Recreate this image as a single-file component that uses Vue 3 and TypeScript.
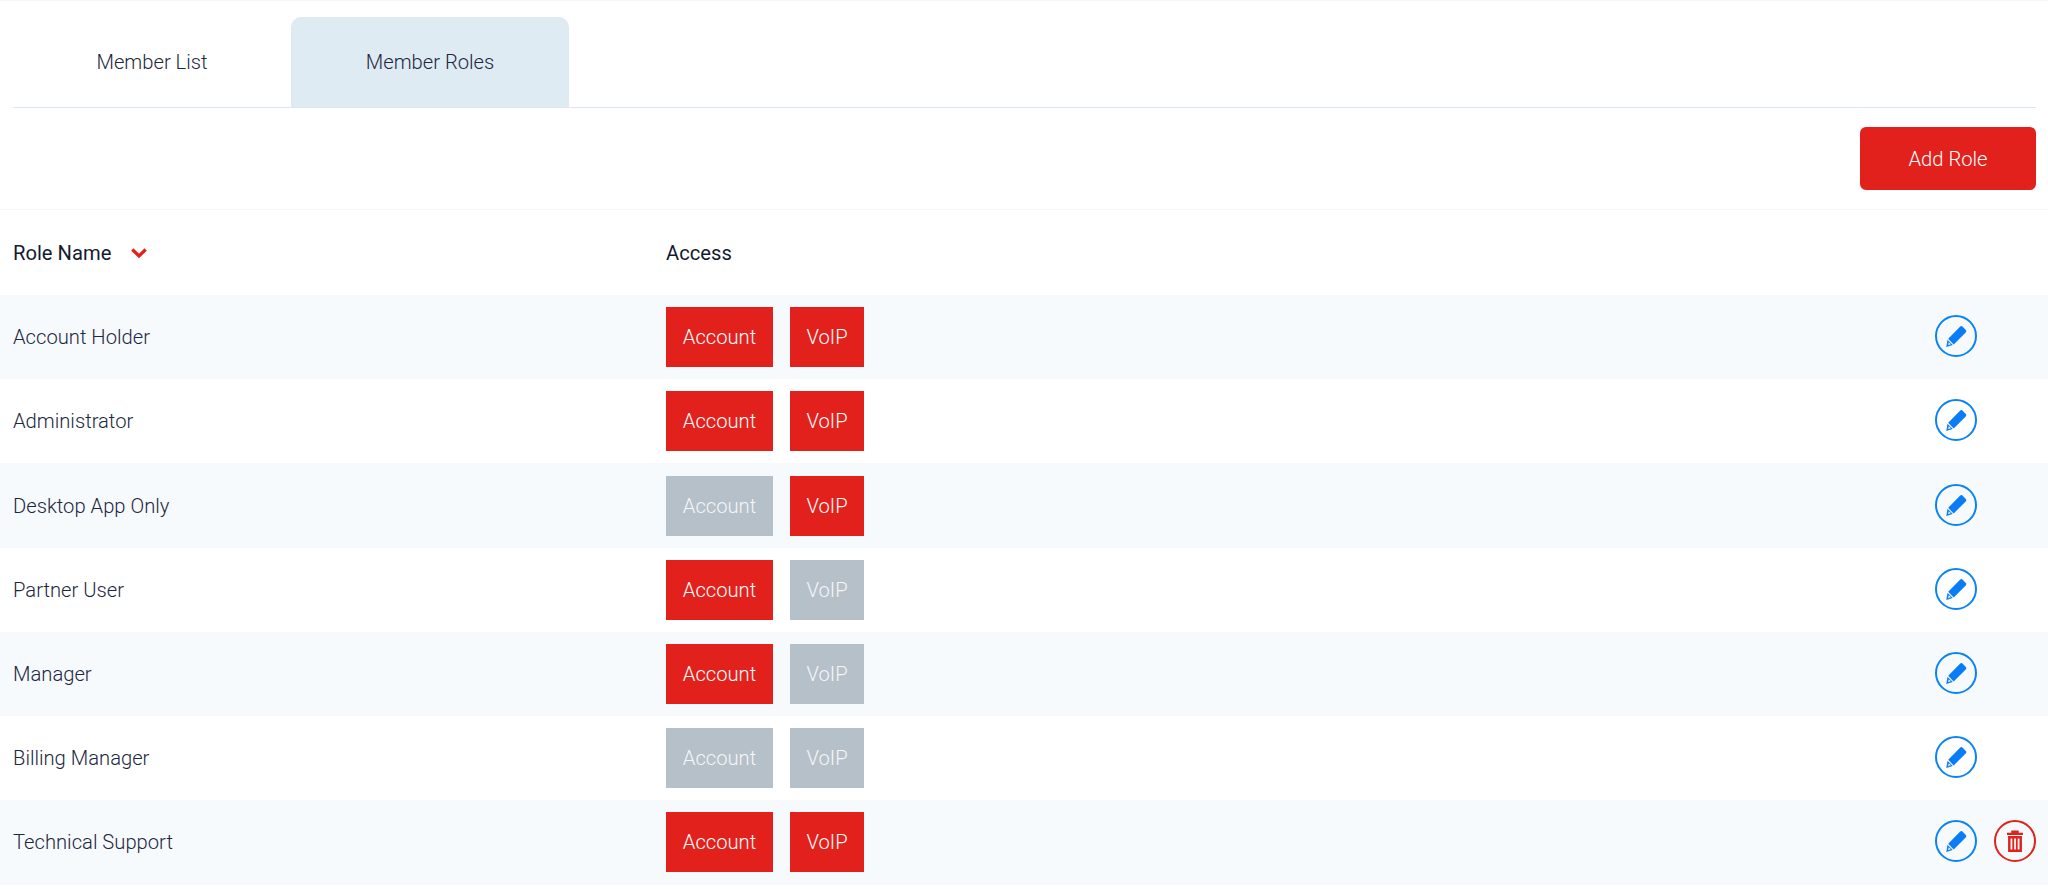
<script setup lang="ts">
interface Role { name: string; account: boolean; voip: boolean; removable?: boolean }
const roles: Role[] = [
  { name: 'Account Holder', account: true, voip: true },
  { name: 'Administrator', account: true, voip: true },
  { name: 'Desktop App Only', account: false, voip: true },
  { name: 'Partner User', account: true, voip: false },
  { name: 'Manager', account: true, voip: false },
  { name: 'Billing Manager', account: false, voip: false },
  { name: 'Technical Support', account: true, voip: true, removable: true },
]
</script>

<template>
  <div class="page">
    <nav class="tabs">
      <div class="tab">Member List</div>
      <div class="tab active">Member Roles</div>
    </nav>
    <div class="toolbar">
      <button class="add">Add Role</button>
    </div>
    <div class="head">
      <div class="name-col head-name">
        <span>Role Name</span>
        <svg class="chev" width="16" height="10" viewBox="0 0 16 10"><path d="M1.300 1.500L8 8l6.700-6.500" fill="none" stroke="#e2211c" stroke-width="3.200"/></svg>
      </div>
      <div>Access</div>
    </div>
    <div class="rows">
      <div v-for="r in roles" :key="r.name" class="row">
        <div class="name-col">{{ r.name }}</div>
        <div class="access">
          <span class="chip account" :class="{ off: !r.account }">Account</span>
          <span class="chip voip" :class="{ off: !r.voip }">VoIP</span>
        </div>
        <div class="actions">
          <span class="circle blue">
            <svg width="24" height="24" viewBox="0 0 24 24">
              <path fill="#0a7cf5" d="M16 2.700c.8-.8 1.800-.8 2.500-.1l3.300 3.300c.7.700.7 1.700-.1 2.500L9.700 20.400 4.200 14.800z"/>
              <path fill="#0a7cf5" fill-rule="evenodd" d="M3.500 15.700l5.200 5.200L2.300 22.900zM4.800 18.300l-.7 2.800 2.800-.8z"/>
            </svg>
          </span>
          <span v-if="r.removable" class="circle red">
            <svg width="16" height="22" viewBox="0 0 15 22" preserveAspectRatio="none">
              <path fill="#e2211c" d="M4 0.500h7v2.200h4v2.300H0V2.700h4z"/>
              <path fill="#e2211c" fill-rule="evenodd" d="M1 6h13v16H1zM3.300 8.500v11h1.700v-11zM6.700 8.500v11h1.700v-11zM10 8.500v11h1.700v-11z"/>
            </svg>
          </span>
        </div>
      </div>
    </div>
  </div>
</template>

<style>
html, body { margin: 0; background: #fff; }
</style>

<style scoped>
.page {
  height: 889px;
  overflow: hidden;
  box-sizing: border-box;
  border-top: 1px solid #f6f7f8;
  font-family: Roboto, sans-serif;
  font-weight: 300;
  font-size: 20.2px;
  color: #1c2740;
}
.tabs {
  display: flex;
  margin: 0 12px 0 13px;
  padding-top: 16px;
  border-bottom: 1px solid #dbe7ef;
}
.tab {
  width: 278px;
  height: 90px;
  display: flex;
  align-items: center;
  justify-content: center;
  border-radius: 10px 10px 0 0;
}
.active { background: #dfebf3; }
.toolbar {
  display: flex;
  justify-content: flex-end;
  padding: 19px 12px 19px 0;
  border-bottom: 1px solid #f7f7f8;
}
.add {
  width: 176px;
  height: 63px;
  border: 0;
  border-radius: 6px;
  background: #e2211c;
  color: #fff;
  font: inherit;
}
.head {
  display: grid;
  grid-template-columns: 666px 1fr;
  align-items: center;
  height: 85px;
  font-weight: 400;
  color: #141b2e;
}
.name-col { padding-left: 13px; }
.head-name { display: flex; align-items: center; gap: 20px; }
.row {
  display: grid;
  grid-template-columns: 666px 1fr auto;
  align-items: center;
  height: 84.22px;
}
.row:nth-child(odd) { background: #f6fafd; }
.access { display: flex; gap: 17px; }
.chip {
  height: 60px;
  display: flex;
  align-items: center;
  justify-content: center;
  background: #e2211c;
  color: #fff;
}
.account { width: 107px; }
.voip { width: 74px; }
.off { background: #b6c0c9; color: #f4f6f8; }
.actions {
  display: flex;
  gap: 17px;
  width: 101px;
  margin: 0 12px 2px 0;
}
.circle {
  width: 42px;
  height: 42px;
  box-sizing: border-box;
  border-radius: 50%;
  display: flex;
  align-items: center;
  justify-content: center;
}
.blue { border: 2px solid #0a84f5; }
.red { border: 2px solid #e2211c; }
</style>
